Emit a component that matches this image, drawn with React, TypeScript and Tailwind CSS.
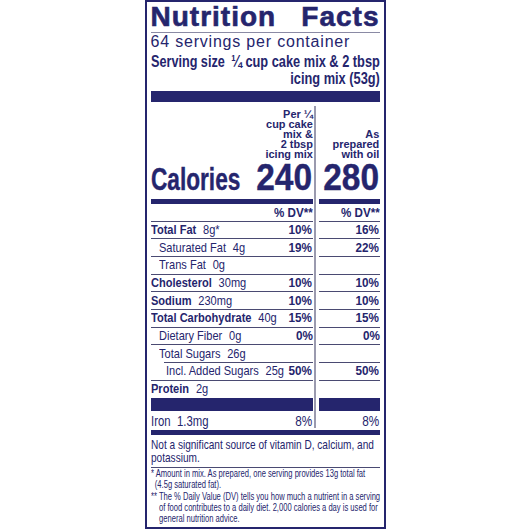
import React from "react";

const F = "font-['Liberation_Sans',Arial,sans-serif]";

type R = {
  label: string;
  amt: string;
  bold?: boolean;
  dv1?: string;
  dv2?: string;
  indent?: number;
  lineIndent?: boolean;
  noLine?: boolean;
};

const rows: R[] = [
  { label: "Total Fat", amt: "8g*", bold: true, dv1: "10%", dv2: "16%" },
  { label: "Saturated Fat", amt: "4g", indent: 1, dv1: "19%", dv2: "22%" },
  { label: "Trans Fat", amt: "0g", indent: 1 },
  { label: "Cholesterol", amt: "30mg", bold: true, dv1: "10%", dv2: "10%" },
  { label: "Sodium", amt: "230mg", bold: true, dv1: "10%", dv2: "10%" },
  { label: "Total Carbohydrate", amt: "40g", bold: true, dv1: "15%", dv2: "15%" },
  { label: "Dietary Fiber", amt: "0g", indent: 1, dv1: "0%", dv2: "0%" },
  { label: "Total Sugars", amt: "26g", indent: 1, lineIndent: true },
  { label: "Incl. Added Sugars", amt: "25g", indent: 2, dv1: "50%", dv2: "50%" },
  { label: "Protein", amt: "2g", bold: true, noLine: true },
];

function Divider({ bottom }: { bottom?: boolean }) {
  return (
    <div className={`w-[6px] shrink-0 flex pl-[1px] ${bottom ? "pb-[2px]" : ""}`}>
      <div className="w-[2px] bg-[#9a9aae]" />
    </div>
  );
}

export default function App() {
  return (
    <div className="w-[530px] h-[530px] bg-white flex justify-center">
      <div
        className={`w-[241px] h-[529px] border-2 border-[#25256d] px-[4px] text-[#25256d] flex flex-col ${F}`}
      >
        {/* Title */}
        <div className="flex justify-between text-[28px] leading-[30px] font-black tracking-[1px] [-webkit-text-stroke:0.6px_#25256d]">
          <span>Nutrition</span>
          <span>Facts</span>
        </div>
        <div className="h-[1px] bg-[#8a8aa4]" />
        <div className="text-[16px] leading-[18px] tracking-[0.8px] whitespace-nowrap">
          64 servings per container
        </div>
        <div className="flex font-bold text-[16px] leading-[17.6px] pt-[1.5px] whitespace-nowrap">
          <div className="flex-1 min-w-0">
            <span className="inline-block origin-left scale-x-[0.79]">Serving size</span>
          </div>
          <span className="shrink-0 inline-block origin-right scale-x-[0.8] text-right">
            ¼ cup cake mix &amp; 2 tbsp
            <br />
            icing mix (53g)
          </span>
        </div>
        <div className="h-[11px] bg-[#25256d] mt-[3px] shrink-0" />

        {/* Column headers */}
        <div className="flex mt-[4px]">
          <div className="w-[162px] shrink-0 flex justify-end pt-[3.5px]">
            <div className="inline-block origin-right scale-x-[0.95] text-right font-bold text-[11.5px] leading-[10px] whitespace-nowrap">
              Per ¼
              <br />
              cup cake
              <br />
              mix &amp;
              <br />
              2 tbsp
              <br />
              icing mix
            </div>
          </div>
          <Divider />
          <div className="flex-1 flex justify-end items-end">
            <div className="inline-block origin-right scale-x-[0.95] text-right font-bold text-[11.5px] leading-[10px] whitespace-nowrap">
              As
              <br />
              prepared
              <br />
              with oil
            </div>
          </div>
        </div>

        {/* Calories */}
        <div className="flex h-[40px]">
          <div className="w-[162px] shrink-0 flex items-baseline pt-[2px] font-bold whitespace-nowrap">
            <div className="flex-1 min-w-0">
              <span className="inline-block origin-left scale-x-[0.73] text-[31px] leading-[34px] [-webkit-text-stroke:0.4px_#25256d]">
                Calories
              </span>
            </div>
            <span className="shrink-0 inline-block origin-right scale-x-[0.93] text-[36px] leading-[34px] [-webkit-text-stroke:0.4px_#25256d]">
              240
            </span>
          </div>
          <Divider />
          <div className="flex-1 flex justify-end items-baseline pt-[2px] font-bold">
            <span className="inline-block origin-right scale-x-[0.93] text-[36px] leading-[34px] [-webkit-text-stroke:0.4px_#25256d]">
              280
            </span>
          </div>
        </div>

        {/* bar under calories */}
        <div className="flex h-[5px] shrink-0">
          <div className="w-[162px] shrink-0 bg-[#25256d]" />
          <Divider />
          <div className="flex-1 bg-[#25256d]" />
        </div>

        {/* %DV header */}
        <div className="flex h-[17.65px] shrink-0">
          <div className="w-[162px] shrink-0 flex flex-col">
            <div className="flex-1 flex items-center justify-end text-[12.5px] leading-[14px] font-bold whitespace-nowrap">
              <span className="inline-block origin-right scale-x-[0.93]">% DV**</span>
            </div>
            <div className="h-[1px] bg-[#4a4a72]" />
          </div>
          <Divider />
          <div className="flex-1 flex flex-col">
            <div className="flex-1 flex items-center justify-end text-[12.5px] leading-[14px] font-bold whitespace-nowrap">
              <span className="inline-block origin-right scale-x-[0.93]">% DV**</span>
            </div>
            <div className="h-[1px] bg-[#4a4a72]" />
          </div>
        </div>

        {rows.map((r) => (
          <div key={r.label} className="flex h-[17.65px] shrink-0">
            <div className="w-[162px] shrink-0 flex flex-col">
              <div
                className={`flex-1 flex items-center text-[13px] leading-[16px] whitespace-nowrap ${
                  r.indent === 1 ? "pl-[8px]" : r.indent === 2 ? "pl-[15px]" : ""
                }`}
              >
                <div className="flex-1 min-w-0">
                  <span className="inline-block origin-left scale-x-[0.85]">
                    <span className={r.bold ? "font-bold" : ""}>{r.label}</span>
                    <span className="ml-[8px]">{r.amt}</span>
                  </span>
                </div>
                <span className="shrink-0 inline-block origin-right scale-x-[0.9] font-bold">{r.dv1}</span>
              </div>
              {!r.noLine && (
                <div className={`h-[1px] bg-[#4a4a72] ${r.lineIndent ? "ml-[13px]" : ""}`} />
              )}
            </div>
            <Divider />
            <div className="flex-1 flex flex-col">
              <div className="flex-1 flex items-center justify-end text-[13px] leading-[16px] font-bold whitespace-nowrap">
                <span className="inline-block origin-right scale-x-[0.9]">{r.dv2}</span>
              </div>
              {!r.noLine && <div className="h-[1px] bg-[#4a4a72]" />}
            </div>
          </div>
        ))}

        {/* thick bar */}
        <div className="flex h-[13px] shrink-0">
          <div className="w-[162px] shrink-0 bg-[#25256d]" />
          <Divider />
          <div className="flex-1 bg-[#25256d]" />
        </div>

        {/* Iron */}
        <div className="flex h-[19px] shrink-0">
          <div className="w-[162px] shrink-0 flex items-center text-[14px] leading-[16px] whitespace-nowrap">
            <div className="flex-1 min-w-0">
              <span className="inline-block origin-left scale-x-[0.81]">
                Iron<span className="ml-[8px]">1.3mg</span>
              </span>
            </div>
            <span className="shrink-0 inline-block origin-right scale-x-[0.84]">8%</span>
          </div>
          <Divider bottom />
          <div className="flex-1 flex items-center justify-end text-[14px] leading-[16px]">
            <span className="inline-block origin-right scale-x-[0.84]">8%</span>
          </div>
        </div>

        <div className="h-[5px] bg-[#25256d] shrink-0" />

        <div className="pt-[3px] pb-[2.5px] text-[13px] leading-[13px] whitespace-nowrap">
          <div className="inline-block origin-left scale-x-[0.775]">
            Not a significant source of vitamin D, calcium, and
            <br />
            potassium.
          </div>
        </div>
        <div className="h-[1px] bg-[#4a4a72] shrink-0" />

        <div className="pt-[1.6px] text-[10px] leading-[10.8px] whitespace-nowrap">
          <div className="inline-block origin-left scale-x-[0.76]">
            <div>* Amount in mix. As prepared, one serving provides 13g total fat</div>
            <div className="pl-[5px]">(4.5g saturated fat).</div>
            <div className="mt-[1px]">** The % Daily Value (DV) tells you how much a nutrient in a serving</div>
            <div className="pl-[10.5px]">of food contributes to a daily diet. 2,000 calories a day is used for</div>
            <div className="pl-[10.5px]">general nutrition advice.</div>
          </div>
        </div>
      </div>
    </div>
  );
}
